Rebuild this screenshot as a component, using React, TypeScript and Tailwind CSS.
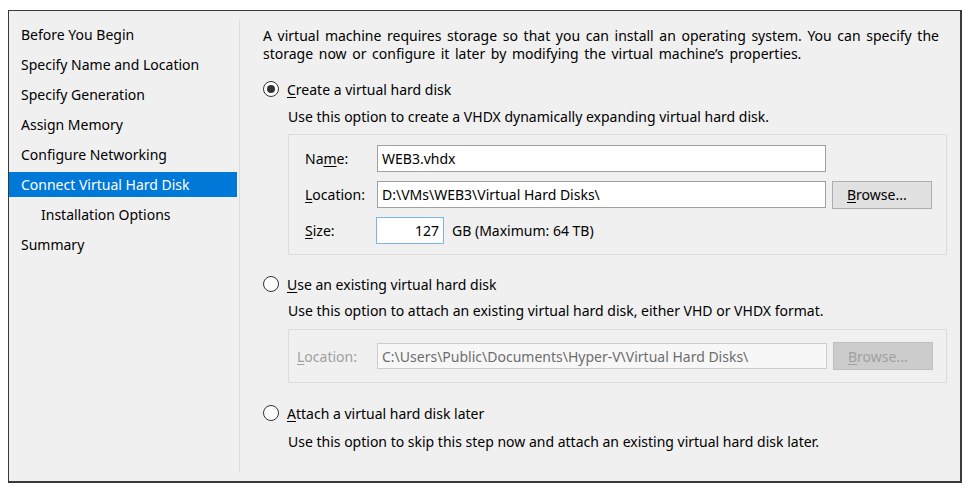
import { ReactNode } from "react";

const steps = [
  { label: "Before You Begin" },
  { label: "Specify Name and Location" },
  { label: "Specify Generation" },
  { label: "Assign Memory" },
  { label: "Configure Networking" },
  { label: "Connect Virtual Hard Disk", active: true },
  { label: "Installation Options", indent: true },
  { label: "Summary" },
];

// Radio button in the classic Windows style
const Radio = ({ checked }: { checked?: boolean }) => (
  <span className="w-[16px] h-[16px] rounded-full border border-[#333333] bg-white flex items-center justify-center shrink-0">
    {checked && <span className="w-[8px] h-[8px] rounded-full bg-[#333333]" />}
  </span>
);

const Key = ({ children }: { children: ReactNode }) => <span className="underline underline-offset-2">{children}</span>;

const App = () => {
  return (
    <div className="w-[965px] h-[486px] bg-white pt-[10px] pl-[8px] text-[14px] text-black" style={{ fontFamily: '"Noto Sans", "Open Sans", sans-serif' }}>
      <div className="w-[954px] h-[473px] border border-[#3a3a3a] border-r-2 border-b-2 bg-[#f0f0f0] flex">
        {/* Step list */}
        <div className="w-[230px] pt-[11px] pr-[2px]">
          {steps.map((s) => (
            <div
              key={s.label}
              className={`h-[25px] mb-[5px] flex items-center ${s.indent ? "pl-[32px]" : "pl-[12px]"} ${
                s.active ? "bg-[#0078d7] text-white" : ""
              }`}
            >
              {s.label}
            </div>
          ))}
        </div>
        <div className="w-px bg-[#dcdcdc] my-[9px]" />

        {/* Page content */}
        <div className="flex-1 pl-[23px] pt-[16px] leading-[17px]">
          <p className="leading-[18px] [word-spacing:2px]">
            A virtual machine requires storage so that you can install an operating system. You can specify the
            <br />
            storage now or configure it later by modifying the virtual machine’s properties.
          </p>

          <div className="h-[20px] mt-[16px] flex items-center gap-[8px]">
            <Radio checked />
            <span>
              <Key>C</Key>reate a virtual hard disk
            </span>
          </div>
          <div className="pl-[25px]">
            <p className="mt-[9px]">Use this option to create a VHDX dynamically expanding virtual hard disk.</p>
            <div className="w-[659px] h-[121px] mt-[9px] border border-[#dcdcdc] pl-[16px] pt-[10px] flex flex-col gap-[9px]">
              <div className="flex items-center h-[27px]">
                <span className="w-[72px]">
                  Na<Key>m</Key>e:
                </span>
                <div className="w-[449px] h-[27px] bg-white border border-[#a0a0a0] flex items-center px-[4px]">WEB3.vhdx</div>
              </div>
              <div className="flex items-center h-[27px]">
                <span className="w-[72px]">
                  <Key>L</Key>ocation:
                </span>
                <div className="w-[449px] h-[27px] bg-white border border-[#a0a0a0] flex items-center px-[4px]">
                  D:\VMs\WEB3\Virtual Hard Disks\
                </div>
                <button className="ml-[6px] w-[100px] h-[28px] bg-[#e1e1e1] border border-[#adadad] text-left pl-[14px]">
                  <Key>B</Key>rowse...
                </button>
              </div>
              <div className="flex items-center h-[27px]">
                <span className="w-[71px]">
                  <Key>S</Key>ize:
                </span>
                <div className="w-[68px] h-[27px] bg-white border border-[#7eb4ea] flex items-center justify-end px-[4px]">127</div>
                <span className="ml-[8px]">GB (Maximum: 64 TB)</span>
              </div>
            </div>
          </div>

          <div className="h-[20px] mt-[19px] flex items-center gap-[8px]">
            <Radio />
            <span>
              <Key>U</Key>se an existing virtual hard disk
            </span>
          </div>
          <div className="pl-[25px]">
            <p className="mt-[8px]">Use this option to attach an existing virtual hard disk, either VHD or VHDX format.</p>
            <div className="w-[659px] h-[54px] mt-[10px] border border-[#dcdcdc] pl-[8px] flex items-center">
              <span className="w-[80px] text-[#a0a0a0]">
                <Key>L</Key>ocation:
              </span>
              <div className="w-[450px] h-[26px] bg-[#f7f7f7] border border-[#cccccc] text-[#6d6d6d] flex items-center px-[4px]">
                C:\Users\Public\Documents\Hyper-V\Virtual Hard Disks\
              </div>
              <button className="ml-[6px] w-[100px] h-[28px] bg-[#cccccc] border border-[#bfbfbf] text-[#a0a0a0] text-left pl-[14px]">
                <Key>B</Key>rowse...
              </button>
            </div>
          </div>

          <div className="h-[20px] mt-[20px] flex items-center gap-[8px]">
            <Radio />
            <span>
              <Key>A</Key>ttach a virtual hard disk later
            </span>
          </div>
          <p className="pl-[25px] mt-[10px]">Use this option to skip this step now and attach an existing virtual hard disk later.</p>
        </div>
      </div>
    </div>
  );
};

export default App;
